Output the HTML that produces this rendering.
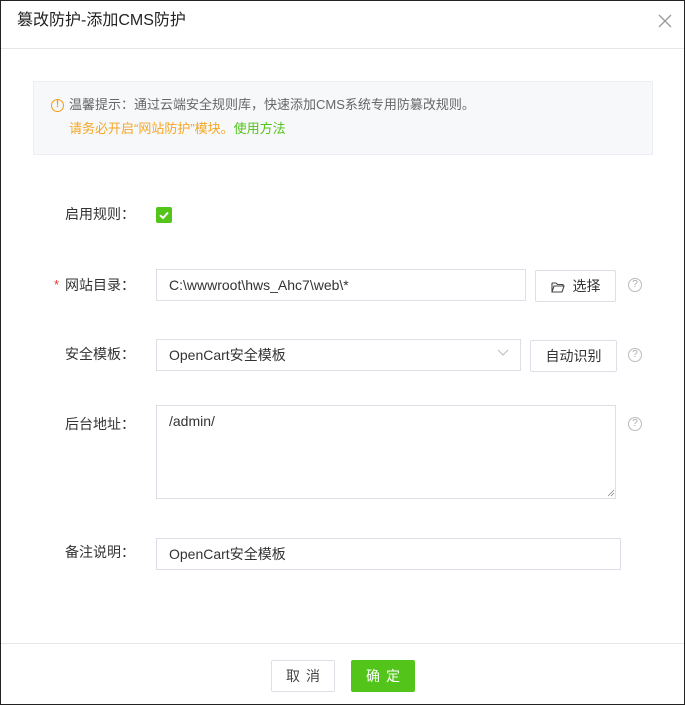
<!DOCTYPE html>
<html><head><meta charset="utf-8"><style>
*{box-sizing:border-box;margin:0;padding:0}
body{width:685px;height:705px;background:#fff;font-family:"Liberation Sans","Noto Sans CJK SC",sans-serif;font-size:14px;color:#333;position:relative;overflow:hidden}
.frame{position:absolute;left:0;top:0;width:685px;height:705px;border:1px solid #222}
.a{position:absolute}
.lbl{position:absolute;left:65px;font-size:14px;color:#333;line-height:20px}
.inp{position:absolute;border:1px solid #dcdfe6;background:#fff;font-size:14px;color:#333;padding-left:12px}
.btn{position:absolute;border:1px solid #dcdfe6;background:#fff;font-size:14px;color:#333;text-align:center;border-radius:2px}
.help{position:absolute;width:14px;height:14px;border:1px solid #bbb;border-radius:50%;font-size:10px;color:#aaa;text-align:center;line-height:12px}
</style></head><body>
<div class="frame"></div>
<div class="a" style="left:17px;top:10px;font-size:16px;line-height:22px;color:#222">篡改防护-添加CMS防护</div>
<svg class="a" style="left:658px;top:14px" width="14" height="14"><path d="M1 1L13 13M13 1L1 13" stroke="#999" stroke-width="1.3"/></svg>
<div class="a" style="left:1px;top:48px;width:683px;height:1px;background:#e6e6e6"></div>
<div class="a" style="left:33px;top:81px;width:620px;height:74px;background:#f7f8fa;border:1px solid #eceef1"></div>
<div class="a" style="left:51px;top:99px;width:13px;height:13px;border:1.3px solid #f39c12;border-radius:50%;color:#f39c12;font-size:10px;line-height:10px;text-align:center;font-weight:bold">!</div>
<div class="a" style="left:69px;top:96px;font-size:13px;line-height:18px;color:#666">温馨提示：通过云端安全规则库，快速添加CMS系统专用防篡改规则。</div>
<div class="a" style="left:69px;top:120px;font-size:13px;line-height:18px;color:#f5a623">请务必开启“网站防护”模块。<span style="color:#52c41a">使用方法</span></div>

<div class="lbl" style="top:204px">启用规则：</div>
<div class="a" style="left:156px;top:207px;width:16px;height:16px;background:#52c41a;border-radius:2px"><svg width="16" height="16"><path d="M4 8.2L7 11L12 5.5" stroke="#fff" stroke-width="2" fill="none"/></svg></div>

<div class="a" style="left:54px;top:277px;color:#e33;font-size:13px">*</div>
<div class="lbl" style="top:275px">网站目录：</div>
<div class="inp" style="left:156px;top:269px;width:370px;height:32px;line-height:30px">C:\wwwroot\hws_Ahc7\web\*</div>
<div class="btn" style="left:535px;top:270px;width:81px;height:32px;line-height:30px"><svg style="vertical-align:-2px;margin-right:8px" width="14" height="12"><path d="M1 2h4l1.5 1.5H12V5M1 2v9h10l2-6H3L1 11" stroke="#444" stroke-width="1.1" fill="none"/></svg>选择</div>
<div class="help" style="left:628px;top:278px">?</div>

<div class="lbl" style="top:344px">安全模板：</div>
<div class="inp" style="left:156px;top:339px;width:365px;height:32px;line-height:30px">OpenCart安全模板</div>
<svg class="a" style="left:497px;top:349px" width="12" height="8"><path d="M1 1L6 6L11 1" stroke="#bbb" stroke-width="1" fill="none"/></svg>
<div class="btn" style="left:530px;top:340px;width:87px;height:32px;line-height:30px">自动识别</div>
<div class="help" style="left:628px;top:348px">?</div>

<div class="lbl" style="top:414px">后台地址：</div>
<div class="inp" style="left:156px;top:405px;width:460px;height:94px;padding-top:5px;line-height:20px">/admin/</div>
<svg class="a" style="left:607px;top:489px" width="8" height="8"><path d="M7 1L1 7M7 4L4 7" stroke="#888" stroke-width="0.8"/></svg>
<div class="help" style="left:628px;top:417px">?</div>

<div class="lbl" style="top:542px">备注说明：</div>
<div class="inp" style="left:156px;top:538px;width:465px;height:32px;line-height:30px">OpenCart安全模板</div>

<div class="a" style="left:1px;top:643px;width:683px;height:1px;background:#e6e6e6"></div>
<div class="btn" style="left:271px;top:660px;width:64px;height:32px;line-height:30px;color:#444;letter-spacing:6px;padding-left:6px">取消</div>
<div class="btn" style="left:351px;top:660px;width:64px;height:32px;line-height:30px;background:#52c41a;border-color:#52c41a;color:#fff;letter-spacing:6px;padding-left:6px">确定</div>
</body></html>
